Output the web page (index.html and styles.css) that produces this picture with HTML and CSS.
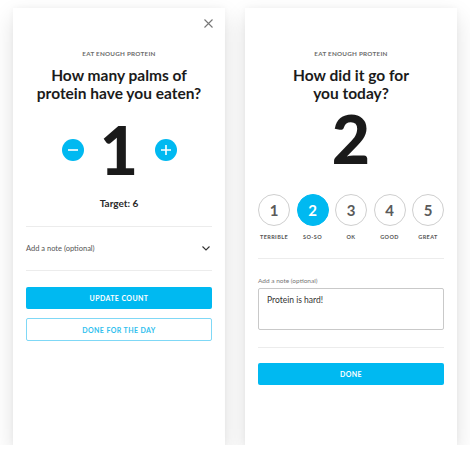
FILE: index.html
```html
<!DOCTYPE html>
<html>
<head>
<meta charset="utf-8">
<link rel="stylesheet" href="styles.css">
</head>
<body>
<div class="stage">
  <div class="card">
    <button class="close" aria-label="Close">
      <svg width="9" height="9" viewBox="0 0 9 9"><path d="M0.5 0.5L8.5 8.5M8.5 0.5L0.5 8.5" stroke="#777" stroke-width="1.1" fill="none"/></svg>
    </button>
    <div class="eyebrow">EAT ENOUGH PROTEIN</div>
    <h1 class="title">How many palms of<br>protein have you eaten?</h1>
    <div class="counter">
      <span class="round">
        <svg width="22" height="22" viewBox="0 0 22 22"><path d="M6 11H16" stroke="#fff" stroke-width="1.6"/></svg>
      </span>
      <span class="big one">1</span>
      <span class="round">
        <svg width="22" height="22" viewBox="0 0 22 22"><path d="M6 11H16M11 6V16" stroke="#fff" stroke-width="1.6"/></svg>
      </span>
    </div>
    <div class="target">Target: 6</div>
    <div class="note-row">
      <span>Add a note (optional)</span>
      <svg width="8" height="5" viewBox="0 0 8 5"><path d="M0.5 0.5L4 4L7.5 0.5" stroke="#333" stroke-width="1.1" fill="none"/></svg>
    </div>
    <button class="btn solid first">UPDATE COUNT</button>
    <button class="btn outline">DONE FOR THE DAY</button>
  </div>

  <div class="card">
    <div class="eyebrow">EAT ENOUGH PROTEIN</div>
    <h1 class="title">How did it go for<br>you today?</h1>
    <div class="big two">2</div>
    <div class="ratings">
      <div class="rate"><span class="dot">1</span><span class="lbl">TERRIBLE</span></div>
      <div class="rate"><span class="dot on">2</span><span class="lbl">SO-SO</span></div>
      <div class="rate"><span class="dot">3</span><span class="lbl">OK</span></div>
      <div class="rate"><span class="dot">4</span><span class="lbl">GOOD</span></div>
      <div class="rate"><span class="dot">5</span><span class="lbl">GREAT</span></div>
    </div>
    <div class="note-label">Add a note (optional)</div>
    <div class="textarea">Protein is hard!</div>
    <div class="sep"></div>
    <button class="btn solid done">DONE</button>
  </div>
</div>
</body>
</html>
```

FILE: styles.css
```css
* { box-sizing: border-box; }
html, body { margin: 0; padding: 0; background: #fff; }
body { font-family: "Lato", "Open Sans", sans-serif; color: #1b1b1b; }

.stage {
  display: flex;
  gap: 20px;
  padding: 8px 0 0 13px;
}

.card {
  position: relative;
  width: 212px;
  height: 437px;
  background: #fff;
  box-shadow: 0 9px 22px rgba(0, 0, 0, 0.12), 0 0 6px rgba(0,0,0,0.04);
  padding: 42px 13px 0;
  display: flex;
  flex-direction: column;
  align-items: stretch;
}

.close {
  position: absolute;
  top: 11px;
  right: 12px;
  border: 0;
  background: none;
  padding: 0;
  width: 9px;
  height: 9px;
  display: flex;
}

.eyebrow {
  text-align: center;
  font-size: 6.3px;
  font-weight: 700;
  letter-spacing: 0.25px;
  color: #6b6b6b;
  line-height: 8px;
}

.title {
  margin: 8px 0 0;
  text-align: center;
  font-size: 15.5px;
  line-height: 18px;
  font-weight: 700;
  color: #1b1b1b;
}

.counter {
  display: flex;
  justify-content: center;
  align-items: center;
  margin-top: 21px;
  height: 54px;
}
.round {
  width: 22px;
  height: 22px;
  border-radius: 50%;
  background: #00b9f1;
  display: flex;
}
.big {
  font-weight: 900;
  font-size: 66px;
  line-height: 54px;
  text-align: center;
  color: #1a1a1a;
}
.one { width: 71px; }
.two { margin-top: 10px; }

.target {
  text-align: center;
  font-size: 10px;
  font-weight: 700;
  margin-top: 20px;
  color: #2a2a2a;
}

.note-row {
  margin-top: 17px;
  border-top: 1px solid #ececec;
  border-bottom: 1px solid #ececec;
  height: 45px;
  display: flex;
  align-items: center;
  justify-content: space-between;
  font-size: 7.5px;
  color: #555;
  padding-right: 2px;
}

.btn {
  display: block;
  width: 100%;
  height: 22px;
  border-radius: 2px;
  font-family: inherit;
  font-size: 7px;
  font-weight: 700;
  letter-spacing: 0.4px;
  padding: 0;
}
.solid {
  background: #00b9f1;
  border: 0;
  color: #fff;
}
.outline {
  margin-top: 9px;
  height: 23px;
  background: #fff;
  border: 1px solid #7fd8f6;
  color: #2fc0ee;
}
.first { margin-top: 16px; }

.ratings {
  display: flex;
  justify-content: space-between;
  margin-top: 28px;
  padding-bottom: 18px;
  border-bottom: 1px solid #ececec;
}
.rate {
  width: 32px;
  display: flex;
  flex-direction: column;
  align-items: center;
}
.dot {
  width: 32px;
  height: 32px;
  border-radius: 50%;
  border: 1px solid #cfcfcf;
  display: flex;
  align-items: center;
  justify-content: center;
  font-size: 15px;
  font-weight: 700;
  color: #5a5a5a;
}
.dot.on {
  background: #00b9f1;
  border-color: #00b9f1;
  color: #fff;
}
.lbl {
  margin-top: 8px;
  font-size: 5.5px;
  font-weight: 700;
  letter-spacing: 0.4px;
  color: #555;
  white-space: nowrap;
}

.note-label {
  margin-top: 18px;
  font-size: 6.5px;
  color: #777;
}
.textarea {
  margin-top: 4px;
  height: 42px;
  border: 1px solid #c9c9c9;
  border-radius: 2px;
  padding: 6px 8px;
  font-size: 8.5px;
  color: #333;
  line-height: 10px;
}
.sep {
  margin-top: 17px;
  border-top: 1px solid #ececec;
}
.done {
  margin-top: 15px;
}
```
